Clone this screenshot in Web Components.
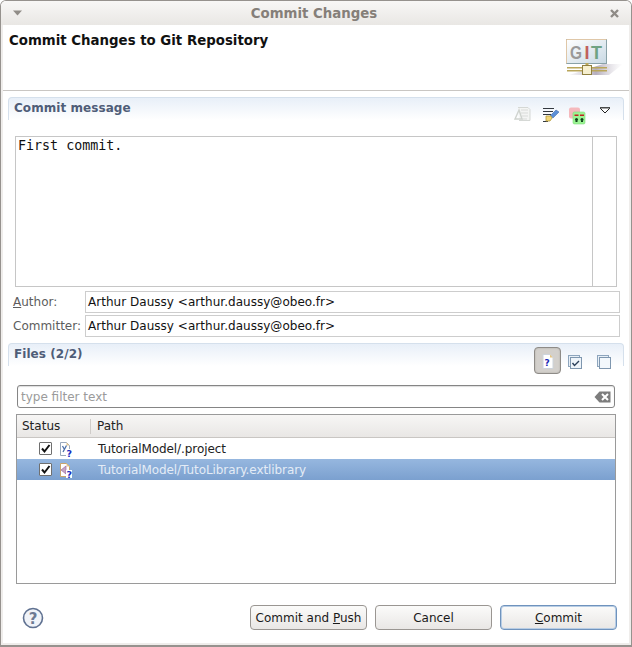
<!DOCTYPE html>
<html>
<head>
<meta charset="utf-8">
<title>Commit Changes</title>
<style>
  html, body { margin: 0; padding: 0; background: #fff; }
  body { font: 12px "DejaVu Sans", sans-serif; color: #1a1a1a; }
  u { text-decoration: underline; }
</style>
</head>
<body>

<app-window heading="Commit Changes">
  <dialog-banner heading="Commit Changes to Git Repository">
    <svg slot="logo" width="60" height="40" viewBox="0 0 60 40">
      <defs>
        <linearGradient id="gitbg" x1="0" y1="0" x2="1" y2="1">
          <stop offset="0" stop-color="#ffffff"/><stop offset="1" stop-color="#c9d9e4"/>
        </linearGradient>
        <linearGradient id="gitsh" x1="0" y1="0" x2="1" y2="0">
          <stop offset="0" stop-color="#d8d4dc" stop-opacity=".2"/><stop offset=".5" stop-color="#b5aebd"/><stop offset="1" stop-color="#d8d4dc" stop-opacity="0"/>
        </linearGradient>
      </defs>
      <path d="M6 37 L46 37 L60 26 L40 26 Z" fill="url(#gitsh)"/>
      <rect x="3.500" y="1.500" width="40" height="24" fill="url(#gitbg)" stroke="#8aa2a8"/>
      <path d="M3.500 25.500V1.500H43.500" fill="none" stroke="#dfc7a8"/>
      <text x="7" y="21" font-family="Liberation Sans" font-weight="bold" font-size="18" textLength="12" lengthAdjust="spacingAndGlyphs" fill="#999999">G</text>
      <text x="21.500" y="21" font-family="Liberation Sans" font-weight="bold" font-size="18" fill="#c0605c">I</text>
      <text x="28" y="21" font-family="Liberation Sans" font-weight="bold" font-size="18" fill="#6fa383">T</text>
      <rect x="4" y="29" width="40" height="1.500" fill="#b9a65a"/>
      <rect x="4" y="32" width="40" height="1.500" fill="#b9a65a"/>
      <rect x="22.500" y="25" width="3" height="4" fill="#b9a65a"/>
      <rect x="19.500" y="27.500" width="9" height="9" fill="#f6efcf" stroke="#8f7f3f"/>
    </svg>
  </dialog-banner>

  <form-section heading="Commit message" style="--head-height:39px">
    <tool-icon slot="tools" kind="signoff" style="margin-right:11px"></tool-icon>
    <tool-icon slot="tools" kind="pencil" style="margin-right:8px"></tool-icon>
    <tool-icon slot="tools" kind="staged" style="margin-right:13px"></tool-icon>
    <tool-icon slot="tools" kind="menu" style="margin-right:12px"></tool-icon>
    <message-box>First commit.</message-box>
  </form-section>

  <person-field style="margin-top:4px"><span slot="label"><u>A</u>uthor:</span>Arthur Daussy &lt;arthur.daussy@obeo.fr&gt;</person-field>
  <person-field style="margin-top:2px"><span slot="label">Committer:</span>Arthur Daussy &lt;arthur.daussy@obeo.fr&gt;</person-field>

  <form-section heading="Files (2/2)" style="margin-top:6px; --head-height:42px">
    <tool-icon slot="tools" kind="untracked" pressed style="margin-right:7px"></tool-icon>
    <tool-icon slot="tools" kind="checkall" style="margin-right:12px"></tool-icon>
    <tool-icon slot="tools" kind="uncheckall" style="margin-right:11px"></tool-icon>
    <filter-box placeholder="type filter text"></filter-box>
    <file-table>
      <file-row kind="project">TutorialModel/.project</file-row>
      <file-row kind="library" selected>TutorialModel/TutoLibrary.extlibrary</file-row>
    </file-table>
  </form-section>

  <button-bar>
    <push-button>Commit and <u>P</u>ush</push-button>
    <push-button>Cancel</push-button>
    <push-button default><u>C</u>ommit</push-button>
  </button-bar>
</app-window>

<script>
class AppWindow extends HTMLElement {
  constructor() {
    super()
    this.attachShadow({ mode: 'open' })
    this.shadowRoot.innerHTML = `
      <style>
        :host { display: flex; flex-direction: column; width: 632px; height: 647px; box-sizing: border-box;
                border: 1px solid #96928e; border-bottom-width: 2px; border-radius: 6px 6px 0 0; overflow: hidden; }
        .bar { flex: none; height: 24px; display: flex; align-items: center; justify-content: space-between;
               padding: 0 12px 0 12px; background: linear-gradient(#f8f7f6, #e9e7e4); }
        .bar b { font: bold 13.33px "DejaVu Sans", sans-serif; color: #857f79; margin-left: -4px; }
        .body { flex: 1; display: flex; flex-direction: column; min-height: 0; background: #fff;
                border: solid #efedeb; border-width: 0 2px 2px; }
      </style>
      <div class="bar">
        <svg width="9" height="6" viewBox="0 0 9 6"><path d="M0 0.500h9L4.500 5.500z" fill="#918d88"/></svg>
        <b></b>
        <svg width="9" height="9" viewBox="0 0 9 9"><path d="M1 1l7 7M8 1L1 8" stroke="#8f8b86" stroke-width="2.400"/></svg>
      </div>
      <div class="body"><slot></slot></div>`
    this.shadowRoot.querySelector('b').textContent = this.getAttribute('heading')
  }
}

class DialogBanner extends HTMLElement {
  constructor() {
    super()
    this.attachShadow({ mode: 'open' })
    this.shadowRoot.innerHTML = `
      <style>
        :host { display: flex; flex: none; justify-content: space-between; height: 66px; box-sizing: border-box;
                background: #fff; border-bottom: 1px solid #c9c6c3; padding: 8px 6px 0 6px; }
        h1 { margin: 0; font: bold 13.33px/16px "DejaVu Sans", sans-serif; color: #111; }
        .logo { padding-top: 5px; height: 40px; }
      </style>
      <h1></h1>
      <div class="logo"><slot name="logo"></slot></div>`
    this.shadowRoot.querySelector('h1').textContent = this.getAttribute('heading')
  }
}

class FormSection extends HTMLElement {
  constructor() {
    super()
    this.attachShadow({ mode: 'open' })
    this.shadowRoot.innerHTML = `
      <style>
        :host { display: block; flex: none; margin: 6px 5px 0; }
        .head { height: var(--head-height, 39px); box-sizing: border-box; display: flex; justify-content: space-between;
                border: 1px solid #d5e0ec; border-bottom: 0; border-radius: 4px 4px 0 0;
                background: linear-gradient(#e8eff8, #fff 22px); position: relative; padding: 2px 0 0 5px; }
        .head::after { content: ""; position: absolute; left: -1px; right: -1px; top: 22px; bottom: 0; background: #fff; }
        b { font: bold 12px/16px "DejaVu Sans", sans-serif; color: #4f5d78; letter-spacing: .06px; }
        .tools { display: flex; align-items: flex-start; position: relative; z-index: 1; }
      </style>
      <div class="head"><b></b><div class="tools"><slot name="tools"></slot></div></div>
      <slot></slot>`
    this.shadowRoot.querySelector('b').textContent = this.getAttribute('heading')
  }
}

class ToolIcon extends HTMLElement {
  constructor() {
    super()
    this.attachShadow({ mode: 'open' })
    const icons = {
      signoff: `<path d="M5 1.500h10l2 2v11H6" fill="#f4f5f4" stroke="#d5d8d5"/><path d="M8 4h7M8 7h7M9 10h6M9 13h5" stroke="#d9dbd9"/><path d="M6 4L2 13h7z" fill="none" stroke="#cfd3cf" stroke-width="1.400"/>`,
      pencil: `<path d="M1 1.500h11M1 4.500h10M1 7.500h8M1 14.500h5" stroke="#33383f" stroke-width="1.200"/><path d="M8 9l6-6 3 2-6 6z" fill="#5c8fd6" stroke="#4470b0" stroke-width=".6"/><path d="M4 9h5l1 2-2 3H4z" fill="#f3d778" stroke="#b39a3c" stroke-width=".8"/>`,
      staged: `<rect x="1" y="0.500" width="11" height="11" rx="2" fill="#f5b9bd"/><rect x="5" y="5" width="12" height="12" rx="1.500" fill="#9cf594" stroke="#7edc78" stroke-width=".6"/><path d="M6.500 7.500h4v1.500h-4zM12 7.500h4v1.500h-4z" fill="#c32222"/><circle cx="8.500" cy="12.500" r="1.500" fill="#10401a"/><circle cx="14" cy="12.500" r="1.500" fill="#10401a"/><path d="M7.500 14.500h2M13 14.500h2" stroke="#10401a"/>`,
      menu: `<path d="M1 1h10" stroke="#111" stroke-width="1.400"/><path d="M1.500 1.500L6 6l4.500-4.500" fill="#fff" stroke="#222"/>`,
      untracked: `<path d="M3 1.500h7l3 3v11H3z" fill="#fff" stroke="#cdd4dc"/><path d="M10 1.500l3 3h-3z" fill="#e5c584"/><text x="4.500" y="13" font-family="DejaVu Sans" font-weight="bold" font-size="9" fill="#1b2ab5">?</text>`,
      checkall: `<rect x="0.500" y="0.500" width="11" height="11" fill="#e7eff7" stroke="#8da5bd"/><rect x="2.500" y="2.500" width="11" height="11" fill="#eef4fa" stroke="#7f97af"/><path d="M4.500 8l2 2.500 4.500-4.500" fill="none" stroke="#2a3f5a" stroke-width="1.400"/>`,
      uncheckall: `<rect x="1.500" y="0.500" width="11" height="11" fill="#e7eff7" stroke="#8da5bd"/><rect x="3.500" y="2.500" width="11" height="11" fill="#f3f8fc" stroke="#7f97af"/>`
    }
    const kind = this.getAttribute('kind')
    const sizes = { menu: [12, 8], signoff: [18, 16], pencil: [18, 16], staged: [18, 18], untracked: [16, 16], checkall: [16, 14], uncheckall: [16, 14] }
    const [w, h] = sizes[kind]
    const pressed = this.hasAttribute('pressed')
    const top = { signoff: 6, pencil: 7, staged: 7, menu: 7, untracked: 1, checkall: 9, uncheckall: 9 }[kind]
    this.shadowRoot.innerHTML = `
      <style>
        :host { display: block; flex: none; margin-top: ${top}px; }
        .press { box-sizing: border-box; width: 27px; height: 27px; border: 1px solid #8e8b87; border-radius: 4px;
                 background: #d3d0cc; display: flex; align-items: center; justify-content: center; box-shadow: inset 0 0 2px #aaa6a1; }
        svg { display: block; }
      </style>
      ${pressed ? '<div class="press">' : ''}<svg width="${w}" height="${h}" viewBox="0 0 ${w} ${h}">${icons[kind]}</svg>${pressed ? '</div>' : ''}`
  }
}

class MessageBox extends HTMLElement {
  constructor() {
    super()
    this.attachShadow({ mode: 'open' })
    this.shadowRoot.innerHTML = `
      <style>
        :host { display: flex; height: 151px; box-sizing: border-box; margin: 0 7px 0 7px; border: 1px solid #c6c6c6; background: #fff; }
        .text { flex: 1; padding: 1px 2px; font: 13.33px/16px "DejaVu Sans Mono", monospace; color: #111; }
        .rail { flex: none; width: 23px; border-left: 1px solid #c6c6c6; }
      </style>
      <div class="text"><slot></slot></div><div class="rail"></div>`
  }
}

class PersonField extends HTMLElement {
  constructor() {
    super()
    this.attachShadow({ mode: 'open' })
    this.shadowRoot.innerHTML = `
      <style>
        :host { display: flex; flex: none; align-items: center; height: 22px; margin-left: 10px; margin-right: 9px; }
        .label { flex: none; width: 72px; color: #5d5d5d; font: 12px "DejaVu Sans", sans-serif; }
        .value { flex: 1; height: 22px; line-height: 20px; box-sizing: border-box; border: 1px solid #cdcdcd; padding: 0 2px;
                 font: 12px/20px "DejaVu Sans", sans-serif; letter-spacing: .03px; color: #111; white-space: nowrap; background: #fff; }
      </style>
      <div class="label"><slot name="label"></slot></div>
      <div class="value"><slot></slot></div>`
  }
}

class FilterBox extends HTMLElement {
  constructor() {
    super()
    this.attachShadow({ mode: 'open' })
    this.shadowRoot.innerHTML = `
      <style>
        :host { display: flex; align-items: center; justify-content: space-between; height: 23px; box-sizing: border-box;
                margin: 0 9px 6px 9px; border: 1px solid #858585; border-radius: 3px; padding: 0 3px; background: #fff;
                box-shadow: inset 0 1px 1px #ddd; }
        span { color: #9b9b9b; font: 12px "DejaVu Sans", sans-serif; }
        svg { display: block; }
      </style>
      <span></span>
      <svg width="17" height="12" viewBox="0 0 17 12"><path d="M0.500 6L5.500 0.500H16.500V11.500H5.500z" fill="#7d7d7d"/><path d="M8 3l6 6M14 3L8 9" stroke="#fff" stroke-width="2"/></svg>`
    this.shadowRoot.querySelector('span').textContent = this.getAttribute('placeholder')
  }
}

class FileTable extends HTMLElement {
  constructor() {
    super()
    this.attachShadow({ mode: 'open' })
    this.shadowRoot.innerHTML = `
      <style>
        :host { display: block; height: 170px; box-sizing: border-box; margin: 0 8px; border: 1px solid #9a9a9a; background: #fff; }
        .head { display: flex; height: 23px; box-sizing: border-box; align-items: center; padding-top: 1px; border-bottom: 1px solid #c9c6c3;
                background: linear-gradient(#f7f6f5, #e9e7e5); font: 12px "DejaVu Sans", sans-serif; color: #222; }
        .status { width: 74px; box-sizing: border-box; padding-left: 5px; height: 15px; line-height: 15px; border-right: 1px solid #cfccc9; }
        .path { padding-left: 6px; line-height: 15px; }
      </style>
      <div class="head"><div class="status">Status</div><div class="path">Path</div></div>
      <slot></slot>`
  }
}

class FileRow extends HTMLElement {
  constructor() {
    super()
    this.attachShadow({ mode: 'open' })
    const selected = this.hasAttribute('selected')
    const kind = this.getAttribute('kind')
    const glyph = kind === 'project'
      ? `<path d="M3.500 5l2 3.500M7.500 4.500L4 11" fill="none" stroke="#4b6fa8" stroke-width="1.300"/>`
      : `<path d="M7 4L2 8l5 4z" fill="#c4a6c4" stroke="#a06aa0" stroke-width=".7"/>`
    this.shadowRoot.innerHTML = `
      <style>
        :host { display: flex; align-items: center; height: 21px; font: 12px "DejaVu Sans", sans-serif; letter-spacing: -.08px;
                color: ${selected ? '#e4ecf6' : '#222'}; background: ${selected ? 'linear-gradient(#96b7df, #7ba0cf)' : 'transparent'}; }
        .check { margin-left: 22px; width: 11px; height: 11px; border: 1px solid #6f6f6f; border-radius: 1px; background: #fff; flex: none; }
        .check svg, .file { display: block; }
        .file { margin: 0 0 0 7px; flex: none; }
        .name { margin-left: 25px; }
      </style>
      <div class="check"><svg width="11" height="11" viewBox="0 0 11 11"><path d="M2 5.500l2.500 3L9.500 2" fill="none" stroke="#111" stroke-width="2"/></svg></div>
      <svg class="file" width="14" height="16" viewBox="0 0 14 16">
        <path d="M1.500 1.500h6l3 3v10h-9z" fill="#fff" stroke="${kind === 'project' ? '#9aa9bd' : '#c9a56c'}"/>
        <path d="M7.500 1.500l3 3h-3z" fill="#e8c88c"/>
        ${glyph}
        <rect x="7" y="8" width="6" height="8" fill="${selected ? '#fff' : '#fff'}"/>
        <text x="7.500" y="15.500" font-family="DejaVu Sans" font-weight="bold" font-size="9.500" fill="#1a2cc0">?</text>
      </svg>
      <div class="name"><slot></slot></div>`
  }
}

class ButtonBar extends HTMLElement {
  constructor() {
    super()
    this.attachShadow({ mode: 'open' })
    this.shadowRoot.innerHTML = `
      <style>
        :host { display: flex; flex: none; align-items: center; margin: 21px 12px 0 19px; gap: 8px; }
        svg { display: block; margin-right: auto; }
      </style>
      <svg width="22" height="22" viewBox="0 0 22 22">
        <circle cx="11" cy="11" r="9.500" fill="#f0f3f8" stroke="#5f7191" stroke-width="1.600"/>
        <text x="11" y="16.500" text-anchor="middle" font-family="DejaVu Sans" font-weight="bold" font-size="15" fill="#6d7a93">?</text>
      </svg>
      <slot></slot>`
  }
}

class PushButton extends HTMLElement {
  constructor() {
    super()
    this.attachShadow({ mode: 'open' })
    this.shadowRoot.innerHTML = `
      <style>
        :host { display: block; width: 117px; height: 25px; box-sizing: border-box; text-align: center;
                border: 1px solid #9a9692; border-radius: 4px; background: linear-gradient(#fbfbfa, #e9e7e5);
                font: 12px/25px "DejaVu Sans", sans-serif; color: #1a1a1a; white-space: nowrap; }
        :host([default]) { border-color: #6f93bd; box-shadow: inset 0 0 0 1px #b8cde4; }
      </style>
      <slot></slot>`
  }
}

customElements.define('app-window', AppWindow)
customElements.define('dialog-banner', DialogBanner)
customElements.define('form-section', FormSection)
customElements.define('tool-icon', ToolIcon)
customElements.define('message-box', MessageBox)
customElements.define('person-field', PersonField)
customElements.define('filter-box', FilterBox)
customElements.define('file-table', FileTable)
customElements.define('file-row', FileRow)
customElements.define('button-bar', ButtonBar)
customElements.define('push-button', PushButton)
</script>
</body>
</html>
